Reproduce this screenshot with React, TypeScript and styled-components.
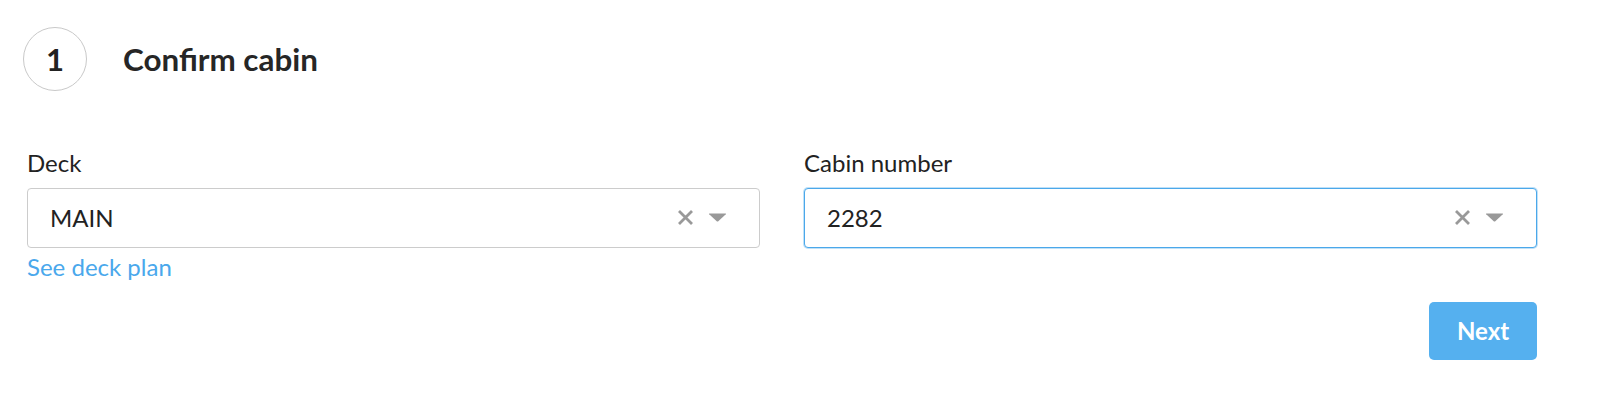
import React, { useState } from "react";
import styled, { createGlobalStyle } from "styled-components";

const GlobalStyle = createGlobalStyle`
  html, body {
    margin: 0;
    padding: 0;
    background: #ffffff;
  }
  body {
    font-family: Lato, "Open Sans", "Liberation Sans", sans-serif;
    color: #222222;
  }
`;

const ClearIcon = () => (
  <svg width="17" height="17" viewBox="0 0 17 17" aria-hidden="true">
    <path d="M2 2 L15 15 M15 2 L2 15" stroke="#999999" strokeWidth="2.8" strokeLinecap="butt" />
  </svg>
);

const CaretIcon = () => (
  <svg width="19" height="9" viewBox="0 0 19 9" aria-hidden="true">
    <path d="M1.5 0.5 H17.5 Q18.5 0.5 17.8 1.3 L10.3 8.2 Q9.5 8.9 8.7 8.2 L1.2 1.3 Q0.5 0.5 1.5 0.5 Z" fill="#999999" />
  </svg>
);

type SelectProps = {
  value: string;
  focused?: boolean;
};

const SelectField = ({ value, focused }: SelectProps) => (
  <SelectBox focused={!!focused}>
    <SelectValue>{value}</SelectValue>
    <Indicators>
      <ClearIcon />
      <CaretIcon />
    </Indicators>
  </SelectBox>
);

const App = () => {
  const [deck] = useState<string>("MAIN");
  const [cabin] = useState<string>("2282");

  return (
    <Page>
      <GlobalStyle />
      <StepHeader>
        <StepNumber>1</StepNumber>
        <StepTitle>Confirm cabin</StepTitle>
      </StepHeader>

      <FieldGrid>
        <Field>
          <Label>Deck</Label>
          <SelectField value={deck} />
          <HelpLink href="#">See deck plan</HelpLink>
        </Field>
        <Field>
          <Label>Cabin number</Label>
          <SelectField value={cabin} focused />
        </Field>
      </FieldGrid>

      <Actions>
        <NextButton type="button">Next</NextButton>
      </Actions>
    </Page>
  );
};

const Page = styled.div`
  padding: 27px 63px 40px 23px;
`;

const StepHeader = styled.div`
  display: flex;
  align-items: center;
  gap: 36px;
`;

const StepNumber = styled.div`
  box-sizing: border-box;
  width: 64px;
  height: 64px;
  border: 1.5px solid #c9c9c9;
  border-radius: 50%;
  display: flex;
  align-items: center;
  justify-content: center;
  font-size: 31px;
  font-weight: 700;
  color: #222222;
`;

const StepTitle = styled.h2`
  margin: 0;
  font-size: 31.4px;
  font-weight: 700;
  color: #262626;
`;

const FieldGrid = styled.div`
  display: grid;
  grid-template-columns: 1fr 1fr;
  column-gap: 44px;
  margin: 58px 0 0 4px;
  align-items: start;
`;

const Field = styled.div`
  display: flex;
  flex-direction: column;
`;

const Label = styled.label`
  font-size: 24px;
  line-height: 1.2;
  color: #222222;
  margin-bottom: 10px;
`;

const SelectBox = styled.div<{ focused: boolean }>`
  box-sizing: border-box;
  height: 60px;
  display: flex;
  align-items: center;
  padding: 0 32px 0 22px;
  border: 1px solid ${({ focused }) => (focused ? "#4ba8ea" : "#cccccc")};
  border-radius: 4px;
  box-shadow: ${({ focused }) => (focused ? "0 0 0 1px rgba(75, 168, 234, 0.35)" : "none")};
  background: #ffffff;
`;

const SelectValue = styled.span`
  flex: 1;
  font-size: 24px;
  color: #222222;
`;

const Indicators = styled.div`
  display: flex;
  align-items: center;
  gap: 14px;
`;

const HelpLink = styled.a`
  margin-top: 5px;
  font-size: 24px;
  line-height: 1.2;
  color: #4aa8ec;
  text-decoration: none;
`;

const Actions = styled.div`
  display: flex;
  justify-content: flex-end;
  margin-top: 20px;
`;

const NextButton = styled.button`
  width: 108px;
  height: 58px;
  border: none;
  border-radius: 5px;
  background: #55b0ef;
  color: #ffffff;
  font-family: inherit;
  font-size: 24px;
  font-weight: 700;
  cursor: pointer;
`;

export default App;
